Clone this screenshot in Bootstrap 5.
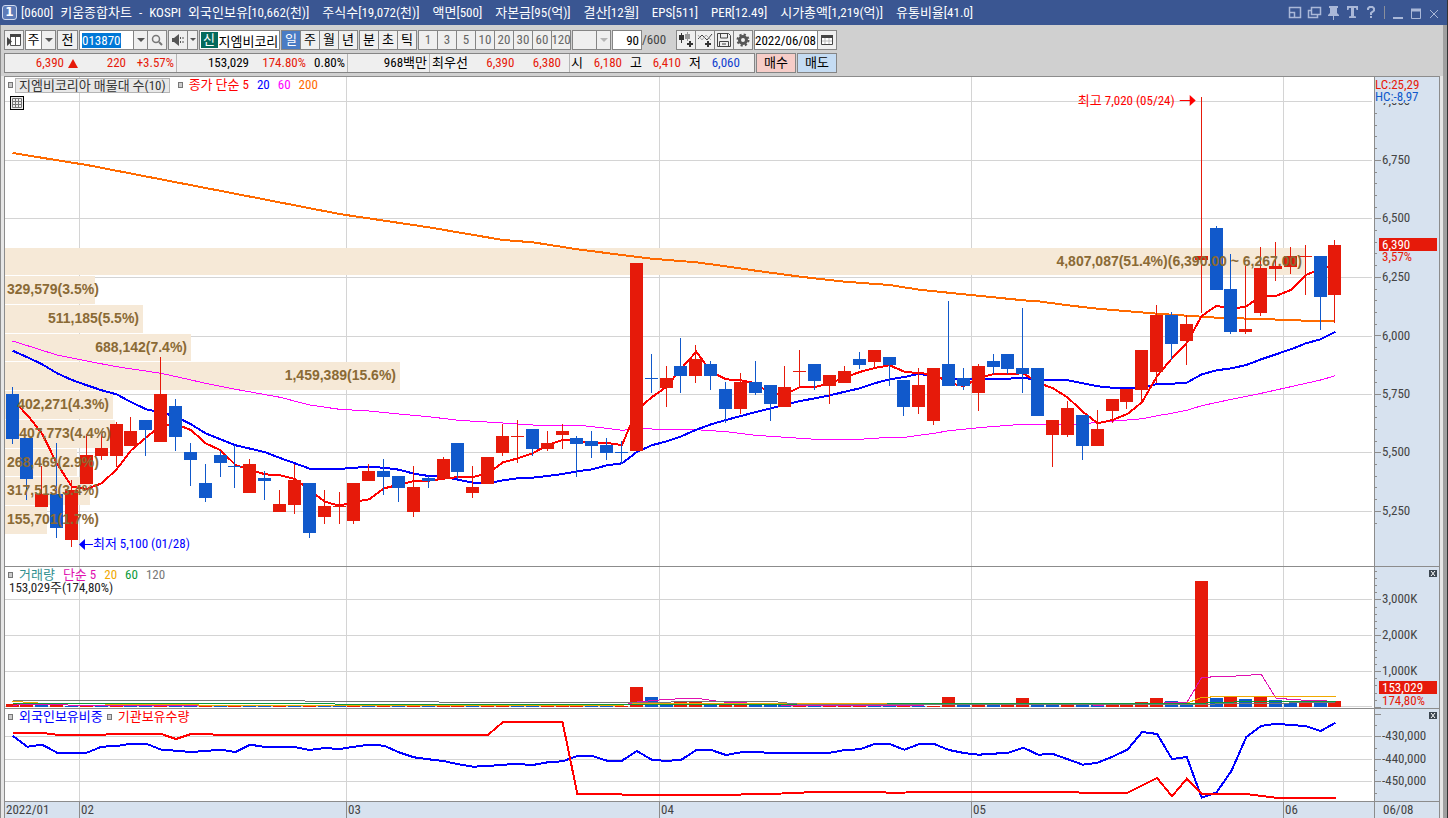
<!DOCTYPE html>
<html lang="ko">
<head>
<meta charset="utf-8">
<meta name="viewport" content="width=device-width, initial-scale=1">
<title>[0600] 키움종합차트</title>
<link href="https://cdn.jsdelivr.net/npm/bootstrap@5.3.0/dist/css/bootstrap.min.css" rel="stylesheet">
<style>
:root{--line:#8c8c8c;--axis:#d7e2ef;--up:#e61a0a;--down:#1159cb}
body{font:13px/16px "Roboto Condensed","Noto Sans CJK KR",sans-serif;color:#000;background:#d0d0d0;overflow:hidden}
.app{border-right:1px solid #333}
.titlebar{height:25px;background:#3a5692;color:#fff;padding:0 6px 0 2px}
.titlebar .no{width:15px;height:15px;border:1px solid #cfd9ee;border-radius:3px;background:#5d7bb8;font:bold 12px/13px "DejaVu Sans",sans-serif;text-align:center;margin-right:4px}
.caption{gap:7px}
.facts{gap:13px}
.winbtn{border:0;background:none;padding:0;width:15px;height:15px;line-height:0}
.frame{border-left:1px solid #8c8c8c;border-right:4px solid #a0a0a0}
.bars{padding:5px 0 3px 3px;row-gap:3px}
.bar{height:20px;gap:1px}
.cell,.tool{height:20px;border:1px solid #858585;border-radius:0;background:#efefef;color:#000;font-size:13px;line-height:16px;padding:0;display:inline-flex;align-items:center;justify-content:center}
.tool{width:20px}
.tool.narrow{width:11px}
.tool.mid{width:15px}
.btn-group>.tool.btn{flex:none}
.joined>*+*{margin-left:-1px}
.tool:hover{background:#fff;color:#000;border-color:#858585}
.tool.on,.tool.on:hover{background:#4a7cc4;color:#fff}
.num .tool{color:#666}
.field{height:20px;border:1px solid #858585;border-radius:0;background:#fff;font-size:13px;line-height:16px;padding:0 2px;color:#000}
.field:focus{outline:0}
.field::selection{background:#0078d7;color:#fff}
.code{width:55px}
.name{width:61px;border:0;height:18px;padding:0 1px}
.count{width:30px;text-align:right}
.day{width:64px;padding:0}
.newtag{background:#046a5c;color:#fff;width:17px;height:16px;line-height:15px;text-align:center}
.quote{width:751px;border:1px solid #858585;background:#efefef}
.quote>div{border-right:1px solid #b5b5b5;display:flex;align-items:center;justify-content:flex-end;padding-right:2px;text-align:right;flex:none}
.quote>div:last-child{border:0;flex:1;justify-content:flex-start;padding:0 0 0 1px}
.w3{width:39px}.w4{width:48px}.w5{width:57px}
.up{color:var(--up)}.down{color:#1040d0}
.order{width:40px}
.charts{border:3px solid #e6e6e6;border-width:0 3px}
.stack{border-left:1px solid var(--line);border-right:1px solid var(--line)}
.pane{border-top:1px solid var(--line)}
.pane.price{flex:490 1 490px}
.pane.volume{flex:142 1 142px}
.pane.hold{flex:93 1 93px}
.plot{background:#fff}
.scale{width:65px;flex:none;border-left:1px solid var(--line);background:var(--axis)}
.dates{height:17px;flex:none;background:var(--axis)}
.key{left:0;top:0;height:16px}
.key i{width:5px;height:6px;border:1px solid #777;background:#ccc;margin:0 2px 0 3px}
.key span{padding:0 4px}
.key .title{border:1px solid #b5b5b5;background:#e8e8e8;color:#333;padding:0 3px;line-height:13px}
.sub{left:4px;top:13px;color:#222}
.gridbtn{left:5px;top:19px;width:14px;height:14px;border:1px solid #000;background:#eee;padding:0;line-height:0}
.shut{right:2px;top:3px;width:8px;height:7px;padding:0;border:0;background:#3c4650;line-height:0}
svg text{font-size:13px}
svg .vp{font:bold 14px "Liberation Sans",sans-serif;fill:#8a6a35}
</style>
</head>
<body>
<div class="app vh-100 d-flex flex-column">
  <header class="titlebar d-flex align-items-center">
    <span class="no">1</span>
    <div class="caption d-flex flex-grow-1 text-nowrap">
      <span>[0600]</span><span>키움종합차트</span><span>-</span><span>KOSPI</span>
      <div class="facts d-flex"><span>외국인보유[10,662(천)]</span><span>주식수[19,072(천)]</span><span>액면[500]</span><span>자본금[95(억)]</span><span>결산[12월]</span><span>EPS[511]</span><span>PER[12.49]</span><span>시가총액[1,219(억)]</span><span>유통비율[41.0]</span></div>
    </div>
    <div class="d-flex align-items-center" style="gap:4px">
      <button class="winbtn" aria-label="축소"><svg width="15" height="15" fill="none" stroke="#aab8d8"><path d="M1.5 2.5h11v10h-11zM1.5 7.500h5v5" stroke-width="1.500"/></svg></button>
      <button class="winbtn" aria-label="복제"><svg width="15" height="15" fill="none" stroke="#aab8d8"><path d="M4.500 2.500h9v7h-9zM4 5.500H1.500v7h9V10" stroke-width="1.500"/></svg></button>
      <button class="winbtn" aria-label="고정"><svg width="15" height="15" fill="#aab8d8"><path d="M3 1h9v2h-1v5l2 2v1H8v4H7v-4H2v-1l2-2V3H3z"/></svg></button>
      <button class="winbtn" aria-label="글꼴"><svg width="15" height="15" fill="#aab8d8"><path d="M2 1h11v4h-1.500L11 3H9v8l2 .5V13H4v-1.500L6 11V3H4l-.5 2H2z"/></svg></button>
      <button class="winbtn" aria-label="도움말"><svg width="15" height="15" fill="none" stroke="#aab8d8" stroke-width="2"><path d="M4 5V3.500L5.500 2h3L10 3.500v2L7 8v2M7 11v2"/></svg></button>
      <svg width="3" height="15"><path d="M1.500 1v13" stroke="#8a8f9c"/></svg>
    </div>
    <div class="d-flex ms-1" style="gap:3px">
      <button class="winbtn" aria-label="최소화"><svg width="15" height="15"><path d="M3 13h10" stroke="#aab8d8" stroke-width="2"/></svg></button>
      <button class="winbtn" aria-label="최대화"><svg width="15" height="15" fill="none" stroke="#aab8d8"><path d="M3.500 4.500h9v9h-9z"/><path d="M3 5h10" stroke-width="3"/></svg></button>
      <button class="winbtn" aria-label="닫기"><svg width="15" height="15"><path d="M4 5l8 8M12 5l-8 8" stroke="#aab8d8"/></svg></button>
    </div>
  </header>

  <main class="frame d-flex flex-column flex-grow-1" style="min-height:0">
    <div class="bars d-flex flex-column">
      <div class="bar d-flex align-items-center text-nowrap">
        <button class="btn tool" aria-label="창 목록"><svg width="16" height="14"><path d="M4.500 1.500h10v11h-10zM9.500 3v9" fill="#fff" stroke="#555"/><path d="M4 1h11v3H4zM1 4l5 4.500L1 13z" fill="#444"/></svg></button>
        <div class="btn-group"><button class="btn tool bg-white" style="width:17px">주</button><button class="btn tool mid" aria-label="종목 구분"><svg width="8" height="5"><path d="M0 0h8L4 4z" fill="#555"/></svg></button></div>
        <button class="btn tool" style="width:21px">전</button>
        <div class="joined d-flex"><input class="field code" id="code" aria-label="종목코드" value="013870"><button class="btn tool mid" aria-label="종목 목록"><svg width="8" height="5"><path d="M0 0h8L4 4z" fill="#555"/></svg></button><button class="btn tool" aria-label="검색"><svg width="12" height="12" fill="none" stroke="#777"><circle cx="5" cy="5" r="3.500" stroke-width="1.500"/><path d="M8 8l3 3" stroke-width="2"/></svg></button></div>
        <div class="btn-group"><button class="btn tool" aria-label="음성"><svg width="14" height="12"><path d="M1 4h2l5-4v12L3 8H1z" fill="#555"/><path d="M9.500 3v2M9.500 7v2M12 3v2M12 7v2" stroke="#555"/></svg></button><button class="btn tool narrow" aria-label="음성 목록"><svg width="6" height="4"><path d="M0 0h6L3 3z" fill="#555"/></svg></button></div>
        <div class="cell bg-white" style="width:81px"><span class="newtag">신</span><input class="field name" aria-label="종목명" value="지엠비코리" readonly></div>
        <div class="btn-group"><button class="btn tool on">일</button><button class="btn tool">주</button><button class="btn tool">월</button><button class="btn tool">년</button></div>
        <div class="btn-group"><button class="btn tool">분</button><button class="btn tool">초</button><button class="btn tool">틱</button></div>
        <div class="btn-group num"><button class="btn tool">1</button><button class="btn tool">3</button><button class="btn tool">5</button><button class="btn tool">10</button><button class="btn tool">20</button><button class="btn tool">30</button><button class="btn tool">60</button><button class="btn tool">120</button></div>
        <div class="joined d-flex"><button class="btn tool" style="width:25px" aria-label="사용자 주기"></button><button class="btn tool mid" aria-label="주기 목록"><svg width="8" height="5"><path d="M0 0h8L4 4z" fill="#b5b5b5"/></svg></button></div>
        <div class="d-flex align-items-center"><input class="field count" id="count" aria-label="표시 개수" value="90"><label for="count" style="width:33px;color:#444">/600</label></div>
        <div class="btn-group">
          <button class="btn tool" aria-label="차트 추가"><svg width="16" height="16"><path d="M3.500 1v10" stroke="#333"/><path d="M1 3h5v5H1z" fill="#333"/><path d="M9.500 0v9" stroke="#999"/><path d="M7 2h5v5H7z" fill="#999"/><path d="M9 12h6M12 9v6" stroke="#333" stroke-width="2"/></svg></button>
          <button class="btn tool" aria-label="지표 추가"><svg width="16" height="16" fill="none"><path d="M1 7l4-4 5 5 5-6" stroke="#444"/><path d="M1 3l4 5 4-5 5 5" stroke="#aaa"/><path d="M8 12h6M11 9v6" stroke="#333" stroke-width="2"/></svg></button>
          <button class="btn tool" aria-label="저장"><svg width="14" height="14" fill="none" stroke="#444"><path d="M.5.5h11l2 2v11H.5z"/><path d="M3.500 1v4h7V1M2.500 13V8.500h9V13M5 11h4"/></svg></button>
          <button class="btn tool" aria-label="설정"><svg width="14" height="14" fill="none" stroke="#555"><circle cx="7" cy="7" r="3.500" stroke-width="3"/><circle cx="7" cy="7" r="5.500" stroke-width="2" stroke-dasharray="2.200 2.120"/></svg></button>
        </div>
        <div class="joined d-flex"><input class="field day" aria-label="기준일" value="2022/06/08"><button class="btn tool" aria-label="달력"><svg width="12" height="12"><path d="M.5 1.500h11v9H.5z" fill="#fff" stroke="#444"/><path d="M0 1h12v3H0z" fill="#444"/><path d="M1 7h10M4 4v6M8 4v6" stroke="#bbb"/></svg></button></div>
      </div>
      <div class="bar d-flex text-nowrap">
        <div class="quote d-flex">
          <div style="width:172px" class="up"><span>6,390</span><svg width="14" height="9"><path d="M9 0l5 9H4z" fill="#e61a0a"/></svg><span class="w4">220</span><span class="w4">+3.57%</span></div>
          <div style="width:171px"><span>153,029</span><span class="up w5">174.80%</span><span class="w3">0.80%</span></div>
          <div style="width:82px">968백만</div>
          <div style="width:140px;padding-right:8px"><span class="flex-grow-1 text-start" style="padding-left:2px">최우선</span><span class="up w4">6,390</span><span class="up w4">6,380</span></div>
          <div><span>시</span><span class="up w3">6,180</span><span class="ms-2">고</span><span class="up w3">6,410</span><span class="ms-2">저</span><span class="down w3">6,060</span></div>
        </div>
        <div class="d-flex" style="gap:1px"><button class="btn tool order" style="background:#f6cdc8">매수</button><button class="btn tool order" style="background:#c5dcf3">매도</button></div>
      </div>
    </div>

    <div class="charts flex-grow-1 d-flex flex-column" style="min-height:0">
      <div class="stack flex-grow-1 d-flex flex-column" style="min-height:0">
        <section class="pane price d-flex">
          <div class="plot position-relative flex-grow-1"><svg id="price" class="position-absolute w-100 h-100"></svg>
            <div class="key position-absolute d-flex align-items-center text-nowrap"><i></i><span class="title">지엠비코리아 매물대 수(10)</span><i class="ms-2"></i><span style="color:#f00">종가 단순 5</span><span style="color:#00f">20</span><span style="color:#f0f">60</span><span style="color:#ff6a00">200</span></div>
            <button class="gridbtn position-absolute" aria-label="표 보기"><svg width="12" height="12"><path d="M1.500 1.500h9v9h-9zM1 4.500h10M1 7.500h10M4.500 1v10M7.500 1v10" fill="none" stroke="#777"/></svg></button>
          </div>
          <div class="scale position-relative"><svg id="priceScale" class="position-absolute w-100 h-100"></svg></div>
        </section>
        <section class="pane volume d-flex">
          <div class="plot position-relative flex-grow-1"><svg id="volume" class="position-absolute w-100 h-100"></svg>
            <div class="key position-absolute d-flex align-items-center text-nowrap"><i></i><span style="color:#2f9090">거래량</span><span style="color:#e010b0">단순 5</span><span style="color:#f0a800">20</span><span style="color:#0a9a3a">60</span><span style="color:#777">120</span></div>
            <div class="sub position-absolute">153,029주(174,80%)</div>
          </div>
          <div class="scale position-relative"><svg id="volumeScale" class="position-absolute w-100 h-100"></svg><button class="shut position-absolute" aria-label="거래량 닫기"><svg width="6" height="5"><path d="M1 0l4 5M5 0L1 5" stroke="#fff"/></svg></button></div>
        </section>
        <section class="pane hold d-flex">
          <div class="plot position-relative flex-grow-1"><svg id="hold" class="position-absolute w-100 h-100"></svg>
            <div class="key position-absolute d-flex align-items-center text-nowrap"><i></i><span style="color:#00f">외국인보유비중</span><i class="ms-0"></i><span style="color:#f00">기관보유수량</span></div>
          </div>
          <div class="scale position-relative"><svg id="holdScale" class="position-absolute w-100 h-100"></svg><button class="shut position-absolute" aria-label="보유 닫기"><svg width="6" height="5"><path d="M1 0l4 5M5 0L1 5" stroke="#fff"/></svg></button></div>
        </section>
        <footer class="pane dates d-flex">
          <div class="position-relative flex-grow-1"><svg id="dates" class="position-absolute w-100 h-100"></svg></div>
          <div class="scale ps-2" style="color:#444">06/08</div>
        </footer>
      </div>
    </div>
  </main>
</div>
<script src="https://cdn.jsdelivr.net/npm/bootstrap@5.3.0/dist/js/bootstrap.bundle.min.js"></script>
<script>
// Candles: direction, body top, body bottom, high, low. Levels count downwards, 175 to each 250 won, 289 = 6,000.
const candles = `B 461 597 441 612|B 594 717 594 780|R 762 801 678 801|B 762 864 609 894|R 750 900 720 921|R 645 732 582 732|R 624 648 582 660|R 552 648 546 681|R 573 618 531 618|B 540 570 540 648|R 461 606 351 606|B 498 591 477 633|B 636 660 609 738|B 729 774 672 786|B 645 669 633 711|B 678 681 615 744|R 672 759 657 759|B 714 723 693 780|R 792 816 750 816|R 720 795 672 822|B 729 879 729 894|R 798 831 750 852|R 798 801 756 852|R 729 843 729 852|R 693 723 672 723|B 693 711 657 765|B 708 744 708 786|R 741 816 678 831|B 714 723 708 744|R 657 717 651 717|B 609 696 609 717|R 741 759 678 774|R 651 732 651 732|R 588 639 552 648|R 588 591 540 669|B 567 627 567 648|R 609 627 573 633|R 573 585 552 627|B 594 612 588 711|B 603 618 573 654|B 615 639 594 660|B 636 639 603 672|R 69 633 69 633|B 414 417 342 459|R 414 444 378 501|B 378 408 294 459|R 357 408 315 429|B 372 408 363 450|B 447 507 426 549|R 426 507 399 522|B 426 459 363 465|B 435 492 435 543|R 441 501 378 501|R 393 396 330 441|B 372 423 372 450|R 405 438 405 492|R 393 429 378 429|B 357 375 336 387|R 330 366 330 384|B 351 375 351 438|B 420 501 420 528|R 435 501 384 522|R 384 543 384 555|B 372 438 183 438|B 414 438 384 450|R 378 459 372 513|B 363 381 342 402|B 342 387 342 402|B 384 402 204 459|B 384 528 384 528|R 540 585 540 681|R 504 585 483 591|B 525 618 525 660|R 567 618 510 618|R 477 513 477 549|R 447 486 447 507|R 330 450 330 486|R 225 396 195 429|B 225 312 216 360|R 252 303 225 375|R 48 60 -429 219|B -36 150 -42 150|B 147 276 42 282|R 267 276 78 282|R 84 219 21 228|R 78 87 6 123|R 48 81 21 102|R 48 51 15 165|B 48 171 48 270|R 15 165 0 249`
  .split('|').map(s => s.split(' ').map((v, i) => i ? +v : v));
const series = s => s.split(' ').map(Number).map((v, i) => [i, v]);
const ma5 = series('480 525 582 672 740 747 730 688 630 592 556 553 570 610 631 675 690 703 706 717 750 785 797 785 778 745 734 723 722 716 711 711 700 667 655 640 615 600 603 607 609 615 510 472 440 385 335 396 418 421 430 462 463 441 441 430 412 396 384 376 395 400 402 430 438 415 402 402 400 428 445 473 515 550 540 522 486 408 355 308 228 197 207 199 168 168 150 105 88 75');
const ma20 = series('332 352 373 400 420 436 451 463 487 508 517 530 553 580 598 616 626 637 654 670 686 687 687 683 681 683 689 701 708 710 719 728 730 721 715 713 708 702 694 688 676 670 636 616 604 589 569 553 540 528 516 505 494 483 475 466 455 445 430 418 411 401 412 416 416 416 416 416 413 420 420 421 430 439 443 444 444 432 431 428 403 391 385 375 358 343 328 310 298 275');
const ma60 = [[0,303],[3,345],[5,363],[7,380],[10,400],[13,430],[15,448],[18,472],[20,495],[22,508],[24,513],[26,522],[28,530],[30,541],[33,549],[35,555],[38,555],[40,565],[41,571],[42,566],[44,568],[46,569],[48,575],[50,586],[52,592],[54,598],[57,598],[59,592],[60,592],[62,580],[63,572],[65,563],[67,556],[68,553],[70,553],[72,552],[73,547],[75,540],[76,536],[77,527],[78,520],[79,511],[80,497],[82,478],[84,460],[86,440],[88,420],[89,407]];
const ma200 = [[0,-261],[5,-225],[13,-156],[22,-78],[28,-38],[33,0],[35,7],[38,28],[41,45],[43,56],[46,67],[48,79],[50,92],[53,110],[56,125],[59,135],[61,149],[64,163],[68,181],[69,184],[71,196],[73,206],[77,221],[81,233],[84,237],[87,242],[89,243]];
// Volume at price: top, bottom, right edge, label, label start (when it does not fit inside the bar)
const profile = [[24,105,1301,'4,807,087(51.4%)(6,390.00 ~ 6,267.00)'],[108,192,90,'329,579(3.5%)',2],[195,279,138,'511,185(5.5%)'],[282,363,186,'688,142(7.4%)'],[366,450,395,'1,459,389(15.6%)'],[453,537,108,'402,271(4.3%)'],[540,624,110,'407,773(4.4%)'],[627,708,72,'268,469(2.9%)',2],[711,795,85,'317,513(3.4%)',2],[798,882,42,'155,701(1.7%)',2]];
const volDir = 'RRBRBRBRBBRBBRBRBBRBRBBRBRBRBRRBRRBBRRRBBRRBBRRBRRBBBRBRRRBBRBRRBRBRRBBRBBRRRRBBRBRBRBBRBR';
const volTop = {0:432,1:434,2:434,3:434,42:382,43:411,44:429,45:426,46:427,47:429,48:433,49:433,50:434,51:434,52:435,53:434,54:435,63:411,64:434,65:434,66:434,67:435,68:414,69:434,70:434,71:434,72:434,73:434,74:435,75:435,76:426,77:414,78:423,79:430,80:63,81:414,82:411,83:417,84:411,85:420,86:429,87:429,88:429,89:423};
const volLines = [
  ['#e010b0',[[0,436],[1,433],[3,433],[4,436],[41,436],[42,426],[44,418],[46,415],[48,427],[50,430],[52,436],[61,436],[63,430],[71,430],[73,436],[76,430],[79,428],[80,352],[82,349],[84,343],[85,415],[87,421],[89,424]]],
  ['#f0a800',[[0,424],[2,430],[8,433],[12,434],[13,436],[41,436],[42,430],[61,430],[63,433],[79,430],[80,412],[82,409],[89,409]]],
  ['#0a9a3a',[[0,430],[21,430],[22,433],[50,433],[80,430],[81,427],[85,424],[89,424]]],
  ['#777',[[0,421],[19,421],[20,424],[28,424],[29,427],[44,427],[45,424],[51,424],[53,433],[80,433],[83,430],[89,428]]]];
const foreign = [[0,527],[1,560],[2,554],[3,578],[5,578],[6,560],[7,558],[8,551],[9,551],[10,569],[11,572],[12,576],[13,573],[14,569],[15,576],[16,554],[17,561],[19,561],[20,570],[21,564],[22,567],[23,560],[24,554],[25,557],[26,577],[27,592],[28,598],[29,603],[30,613],[31,620],[32,618],[33,614],[34,612],[35,615],[36,607],[37,604],[38,588],[39,588],[40,602],[41,602],[42,573],[43,599],[44,603],[45,599],[46,570],[47,570],[48,585],[49,577],[52,578],[55,578],[56,570],[57,568],[58,552],[59,552],[60,569],[61,552],[62,552],[63,570],[64,579],[65,584],[67,578],[68,563],[69,584],[70,582],[71,598],[72,614],[73,608],[74,590],[75,569],[76,516],[77,522],[78,597],[79,591],[80,713],[81,697],[82,633],[83,531],[84,498],[85,491],[86,495],[87,498],[88,513],[89,488]];
const inst = [[0,519],[2,519],[3,524],[6,524],[7,522],[10,522],[11,537],[12,522],[14,524],[32,524],[33,486],[37,486],[38,702],[40,702],[42,705],[47,705],[51,702],[54,696],[58,696],[59,698],[63,696],[71,696],[72,698],[75,698],[77,654],[78,709],[79,656],[80,701],[83,702],[85,713],[89,713]];
const months = [[74,'02'],[341,'03'],[654,'04'],[966,'05'],[1278,'06']];
const UP = '#e61a0a', DOWN = '#1159cb', GRID = '#d4d4d4';

const rect = (x, y, w, h, f) => `<rect x="${Math.round(x)}" y="${Math.round(y)}" width="${w}" height="${Math.max(1, Math.round(h))}" fill="${f}"/>`;
const text = (x, y, s, f, extra = '') => `<text x="${x}" y="${y}" fill="${f}" ${extra}>${s}</text>`;
const el = id => document.getElementById(id);

function draw() {
  const W = el('price').clientWidth, sx = W / 1369;
  const mid = i => (7.5 + 14.865 * i) * sx;
  const line = (pts, y, c, w) => `<polyline fill="none" stroke="${c}" stroke-width="${w}" points="${pts.map(p => mid(p[0]).toFixed(1) + ',' + y(p[1]).toFixed(1)).join(' ')}"/>`;
  const grid = (rows, H) => rows.map(r => rect(0, r, W - 2, 1, GRID)).join('') + months.map(m => rect(m[0] * sx, 0, 1, H, GRID)).join('');
  const crisp = s => `<g shape-rendering="crispEdges">${s}</g>`;
  const scaler = (H, base, off) => u => (off + u / 3) * H / base;

  // price
  let H = el('price').clientHeight, y = scaler(H, 489, 163);
  const levels = [-416, -241, -66, 111, 288, 462, 636, 813];
  let g = grid(levels.map(y), H);
  profile.forEach(p => g += rect(0, y(p[0]), Math.round(p[2] * sx), y(p[1]) - y(p[0]), '#f6e9d7'));
  let out = crisp(g + line(ma200, y, '#ff6a00', 2) + line(ma60, y, '#f0f', 1) + line(ma20, y, '#00f', 2) + line(ma5, y, '#f00', 2));
  g = '';
  const bw = Math.round(13 * sx);
  candles.forEach(([d, t, b, h, l], i) => {
    const c = d === 'R' ? UP : DOWN, x = Math.floor(mid(i) - bw / 2);
    g += rect(x + (bw - 1) / 2, y(h), 1, y(l) - y(h), c) + rect(x, y(t), bw, y(b) - y(t), c);
  });
  out += crisp(g);
  profile.forEach(p => {
    const ty = Math.round(y((p[0] + p[1]) / 2)) + 4;
    out += p[4] ? text(p[4], ty, p[3], '#8a6a35', 'class="vp"') : text(p[2] * sx - 4, ty, p[3], '#8a6a35', 'class="vp" text-anchor="end"');
  });
  const hi = mid(80), hy = Math.round(y(-416));
  out += text(hi - 27, hy + 4, '최고 7,020 (05/24)', '#f00', 'text-anchor="end"') + `<path d="M${hi - 22} ${hy - 1}h10v-5l6 5.500-6 5.500v-5h-10z" fill="#f00"/>`;
  const lo = mid(4), ly = Math.round(y(912));
  out += text(lo + 21, ly + 4, '최저 5,100 (01/28)', '#00f') + `<path d="M${lo + 21} ${ly}h-8v-5l-6 5.500 6 5.500v-5h8z" fill="#00f"/>`;
  el('price').innerHTML = out;

  g = '';
  for (let k = -4; k < 37; k++) g += rect(0, y(-416 + k * 35.1), k % 5 ? 2 : 6, 1, '#8c8c8c');
  const labels = ['7,000', '6,750', '6,500', '6,250', '6,000', '5,750', '5,500', '5,250'];
  out = crisp(g) + levels.map((l, i) => text(7, Math.round(y(l)) + 4, labels[i], '#444')).join('');
  out += rect(0, 0, 64, 26, '#d7e2ef') + text(0, 12, 'LC:25,29', UP) + text(0, 24, 'HC:-8,97', DOWN);
  const cy = Math.round(y(15));
  out += text(7, cy + 16, '3,57%', UP) + rect(4, cy - 7, 58, 13, UP) + text(7, cy + 4, '6,390', '#fff');
  el('priceScale').innerHTML = out;

  // volume
  H = el('volume').clientHeight; y = scaler(H, 141, -7);
  const vl = [118, 226, 334, 439];
  g = grid(vl.map(y), H);
  for (let i = 0; i < 90; i++) {
    const t = volTop[i] || 438;
    g += rect(Math.floor(mid(i) - bw / 2), y(t), bw, y(441) - y(t), volDir[i] === 'B' ? DOWN : UP);
  }
  el('volume').innerHTML = crisp(g) + crisp(volLines.map(v => line(v[1], y, v[0], 1)).join(''));
  g = '';
  for (let k = -4; k < 16; k++) g += rect(0, y(118 + k * 21.500), k % 5 ? 2 : 6, 1, '#8c8c8c');
  out = crisp(g) + ['3,000K', '2,000K', '1,000K'].map((s, i) => text(7, Math.round(y(vl[i])) + 4, s, '#444')).join('');
  const vy = Math.round(y(385));
  out += rect(4, vy - 7, 58, 13, UP) + text(7, vy + 4, '153,029', '#fff') + text(7, vy + 17, '174,80%', UP);
  el('volumeScale').innerHTML = out;

  // holdings
  H = el('hold').clientHeight; y = scaler(H, 92, -149);
  const hl = [529, 598, 664];
  el('hold').innerHTML = crisp(grid(hl.map(y), H) + line(foreign, y, '#00f', 2) + line(inst, y, '#f00', 2));
  g = '';
  for (let k = -2; k < 6; k++) g += rect(0, y(529 + k * 33.700), k % 2 ? 2 : 6, 1, '#8c8c8c');
  el('holdScale').innerHTML = crisp(g) + ['-430,000', '-440,000', '-450,000'].map((s, i) => text(7, Math.round(y(hl[i])) + 4, s, '#444')).join('');

  // dates
  el('dates').innerHTML = text(1, 12, '2022/01', '#444') + months.map(m => rect(m[0] * sx, 0, 1, 16, '#8c8c8c') + text(Math.round(m[0] * sx) + 2, 12, m[1], '#444')).join('');
}
draw();
addEventListener('resize', draw);
el('code').focus();
el('code').select();
</script>
</body>
</html>
